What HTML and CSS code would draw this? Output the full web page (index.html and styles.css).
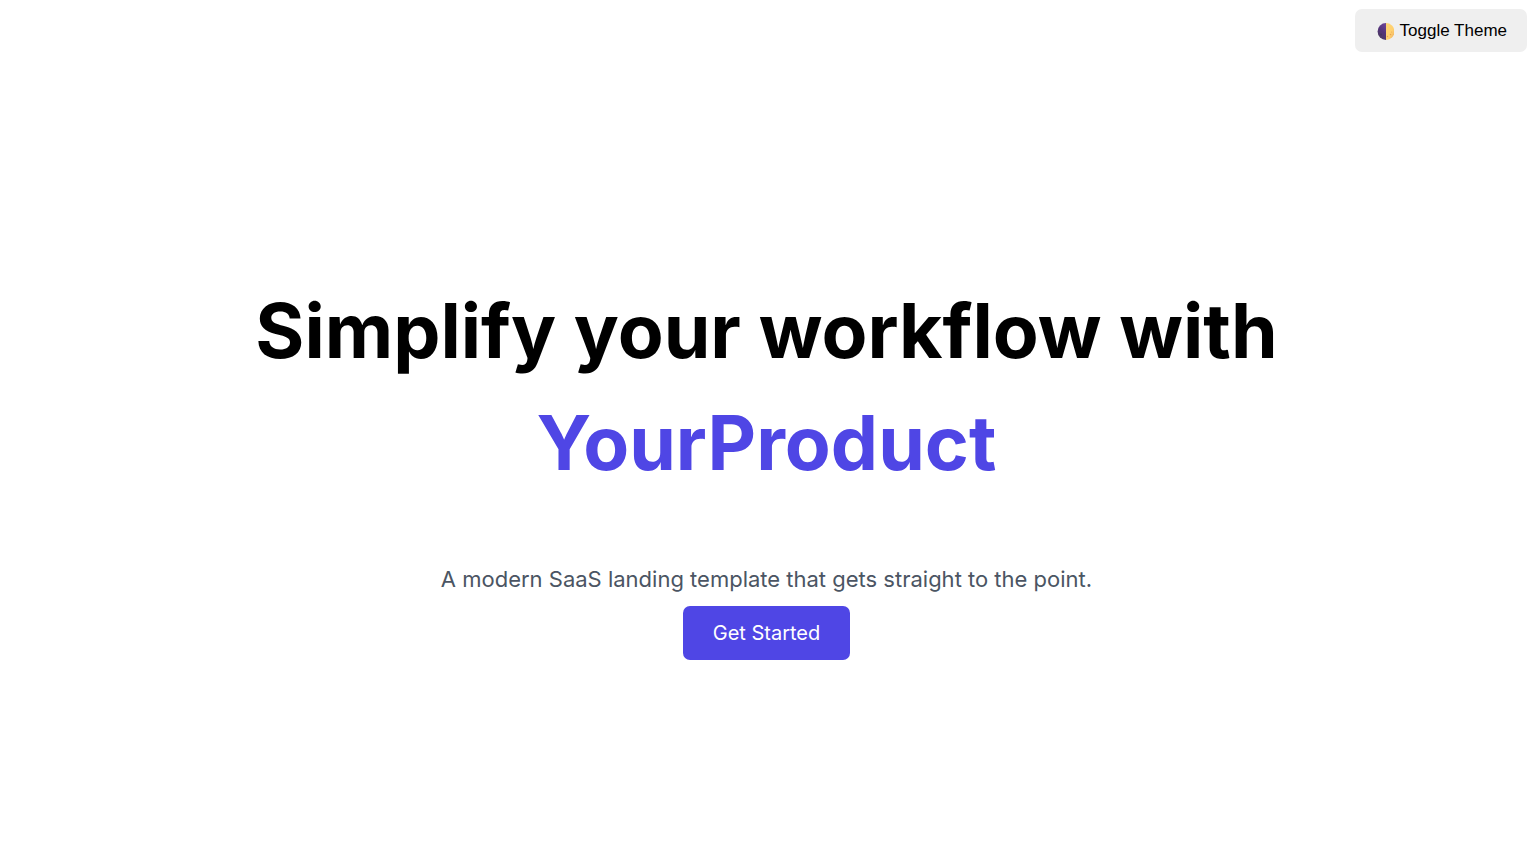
FILE: index.html
```html
<!DOCTYPE html>
<html lang="en">
<head>
  <meta charset="UTF-8" />
  <meta name="viewport" content="width=device-width, initial-scale=1.0" />
  <title>YourProduct</title>
  <link rel="stylesheet" href="styles.css">
</head>
<body>
  <header class="topbar">
    <button type="button" class="theme-toggle" id="themeToggle">
      <svg class="moon" viewBox="0 0 17 17" aria-hidden="true">
        <defs>
          <linearGradient id="dark" x1="0.8" y1="0" x2="0.4" y2="1">
            <stop offset="0" stop-color="#6d4496" />
            <stop offset="0.5" stop-color="#533479" />
            <stop offset="1" stop-color="#4b3b60" />
          </linearGradient>
          <linearGradient id="light" x1="0" y1="0" x2="1" y2="1">
            <stop offset="0" stop-color="#ffd673" />
            <stop offset="0.6" stop-color="#ffd070" />
            <stop offset="1" stop-color="#e9a75c" />
          </linearGradient>
        </defs>
        <path d="M9 0.1A8.4 8.4 0 1 0 9 16.9z" fill="url(#dark)" />
        <path d="M9 0.1A8.4 8.4 0 0 1 9 16.9z" fill="url(#light)" />
        <g fill="#e8a350">
          <circle cx="13.5" cy="11.5" r="0.8" />
          <circle cx="10.5" cy="13.5" r="0.7" />
          <circle cx="14.6" cy="9" r="0.5" />
        </g>
        <circle cx="4" cy="11.5" r="1" fill="#46335f" />
      </svg>
      Toggle Theme
    </button>
  </header>

  <main class="hero">
    <h1>Simplify your workflow with <span class="brand">YourProduct</span></h1>
    <p>A modern SaaS landing template that gets straight to the point.</p>
    <a href="#" class="cta">Get Started</a>
  </main>

  <script>
    document.getElementById("themeToggle").addEventListener("click", () => {
      document.body.classList.toggle("dark");
    });
  </script>
</body>
</html>
```

FILE: styles.css
```css
* {
  box-sizing: border-box;
}
body {
  margin: 0;
  min-height: 100vh;
  display: flex;
  flex-direction: column;
  font-family: Inter, sans-serif;
  line-height: 1.5;
  background: #fff;
  color: #000;
}
.topbar {
  display: flex;
  justify-content: flex-end;
  padding: 9px 6px;
}
.theme-toggle {
  display: flex;
  align-items: center;
  gap: 6px;
  padding: 12px 20px 11px 22px;
  border: none;
  border-radius: 7px;
  background: #efefef;
  color: #000;
  font-family: "Liberation Sans", Arial, sans-serif;
  font-size: 17px;
  line-height: 20px;
  cursor: pointer;
}
.moon {
  width: 17px;
  height: 17px;
}
.hero {
  flex: 1;
  display: flex;
  flex-direction: column;
  align-items: center;
  justify-content: center;
  padding: 19px 24px 0;
  text-align: center;
}
h1 {
  max-width: 1200px;
  margin: 0 0 63px;
  font-size: 75px;
  font-weight: 700;
  line-height: 112px;
}
.brand {
  display: block;
  color: #4f46e5;
}
.hero p {
  margin: 0 0 10px;
  font-size: 22px;
  line-height: 34px;
  color: #4b5563;
}
.cta {
  padding: 12px 30px;
  border-radius: 7px;
  background: #4f46e5;
  color: #fff;
  font-size: 20px;
  line-height: 30px;
  text-decoration: none;
}
.cta:hover {
  background: #4338ca;
}
.dark {
  background: #111827;
  color: #fff;
}
.dark .hero p {
  color: #d1d5db;
}
```
